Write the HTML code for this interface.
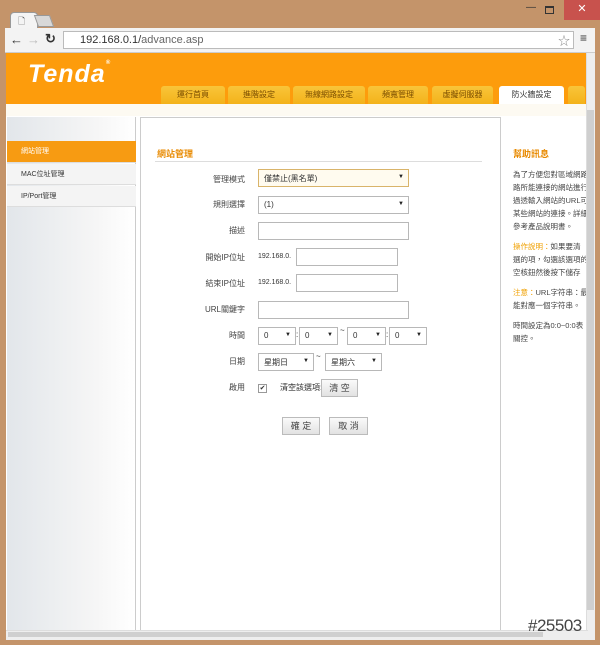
<!DOCTYPE html>
<html><head><meta charset="utf-8"><style>
*{margin:0;padding:0;box-sizing:border-box}
body{width:600px;height:645px;background:#c4946a;position:relative;overflow:hidden;font-family:"Liberation Sans","Noto Sans CJK TC",sans-serif;font-size:8px;color:#333}
.a{position:absolute}
.sel{position:absolute;background:#fff;border:1px solid #b8b8b8;font-size:8px;padding:3px 5px;height:18px}
.sel:after{content:"▼";position:absolute;right:4px;top:4px;font-size:6px;color:#222}
.inp{position:absolute;background:#fff;border:1px solid #b8b8b8;height:18px}
.lbl{position:absolute;width:100px;text-align:right;font-size:8px;color:#444}
.btn{position:absolute;background:linear-gradient(#fafafa,#e2e2e2);border:1px solid #bbb;font-size:9px;text-align:center;line-height:16px;color:#444}
.tab{position:absolute;top:86px;height:18px;background:linear-gradient(#f9c53a,#f3b21a);border-radius:3px 3px 0 0;font-size:8px;text-align:center;line-height:18px;color:#7a4d00}
.side{position:absolute;left:7px;width:129px;height:21px;font-size:7px;line-height:21px;padding-left:14px;border-bottom:1px solid #ddd}
</style></head><body>
<div class="a" style="left:564px;top:0;width:36px;height:20px;background:#c8524d;color:#fff;text-align:center;font-size:11px;line-height:18px">✕</div>
<div class="a" style="left:526px;top:2px;font-size:10px;color:#333">—</div>
<div class="a" style="left:545px;top:6px;width:9px;height:8px;border:1px solid #333;border-top-width:2px"></div>
<div class="a" style="left:10px;top:12px;width:28px;height:17px;background:#f4f4f4;border-radius:4px 4px 0 0;border:1px solid #999;border-bottom:none"></div>
<div class="a" style="left:18px;top:14px;font-size:9px;color:#555">🗋</div>
<div class="a" style="left:36px;top:15px;width:16px;height:12px;background:#d8d8d8;border:1px solid #999;transform:skewX(20deg)"></div>
<div class="a" style="left:5px;top:28px;width:590px;height:25px;background:#f3f3f3;border-bottom:1px solid #ccc"></div>
<div class="a" style="left:10px;top:32px;font-size:13px;color:#333">←</div>
<div class="a" style="left:27px;top:32px;font-size:13px;color:#bbb">→</div>
<div class="a" style="left:45px;top:31px;font-size:13px;color:#333;font-weight:bold">↻</div>
<div class="a" style="left:63px;top:31px;width:511px;height:18px;background:#fff;border:1px solid #bbb;font-size:11px;line-height:16px;padding-left:16px;color:#333">192.168.0.1/<span style="color:#666">advance.asp</span></div>
<div class="a" style="left:558px;top:32px;font-size:12px;color:#888">☆</div>
<div class="a" style="left:580px;top:31px;font-size:12px;color:#333">≡</div>
<div class="a" style="left:6px;top:53px;width:582px;height:587px;background:#fff"></div>
<div class="a" style="left:6px;top:53px;width:582px;height:52px;background:#fd9c0c"></div>
<div class="a" style="left:28px;top:60px;font-size:25px;font-weight:bold;font-style:italic;color:#fff;letter-spacing:1px;font-family:'Liberation Sans',sans-serif">Tenda<span style="font-size:6px;vertical-align:top">®</span></div>
<div class="tab" style="left:161px;width:64px">運行首頁</div>
<div class="tab" style="left:228px;width:62px">進階設定</div>
<div class="tab" style="left:293px;width:72px">無線網路設定</div>
<div class="tab" style="left:368px;width:60px">頻寬管理</div>
<div class="tab" style="left:432px;width:61px">虛擬伺服器</div>
<div class="tab" style="left:499px;width:65px;background:#fff;color:#333">防火牆設定</div>
<div class="tab" style="left:568px;width:17px"></div>
<div class="a" style="left:6px;top:104px;width:582px;height:12px;background:#fdfaf2"></div>
<div class="a" style="left:7px;top:117px;width:129px;height:513px;background:linear-gradient(90deg,#e2e6ea,#f6f6f6 70%,#fff);border-right:1px solid #ccc"></div>
<div class="side" style="top:141px;background:#f79b12;color:#fff;height:22px">網站管理</div>
<div class="side" style="top:164px;background:#f4f4f4">MAC位址管理</div>
<div class="side" style="top:186px;background:#f4f4f4">IP/Port管理</div>
<div class="a" style="left:140px;top:117px;width:361px;height:513px;border:1px solid #ccc;border-bottom:none"></div>
<div class="a" style="left:157px;top:147px;font-size:9px;color:#e88a00;font-weight:bold">網站管理</div>
<div class="a" style="left:155px;top:161px;width:327px;height:1px;background:#ddd"></div>
<div class="lbl" style="left:145px;top:174px">管理模式</div>
<div class="sel" style="left:258px;top:169px;width:151px;border-color:#d9b46a;background:#fffbef">僅禁止(黑名單)</div>
<div class="lbl" style="left:145px;top:199px">規則選擇</div>
<div class="sel" style="left:258px;top:196px;width:151px">(1)</div>
<div class="lbl" style="left:145px;top:225px">描述</div>
<div class="inp" style="left:258px;top:222px;width:151px"></div>
<div class="lbl" style="left:145px;top:252px">開始IP位址</div>
<div class="a" style="left:258px;top:253px;font-size:7px">192.168.0.</div>
<div class="inp" style="left:296px;top:248px;width:102px"></div>
<div class="lbl" style="left:145px;top:278px">結束IP位址</div>
<div class="a" style="left:258px;top:279px;font-size:7px">192.168.0.</div>
<div class="inp" style="left:296px;top:274px;width:102px"></div>
<div class="lbl" style="left:145px;top:304px">URL關鍵字</div>
<div class="inp" style="left:258px;top:301px;width:151px"></div>
<div class="lbl" style="left:145px;top:330px">時間</div>
<div class="sel" style="left:258px;top:327px;width:38px">0</div>
<div class="a" style="left:296px;top:330px">:</div>
<div class="sel" style="left:299px;top:327px;width:39px">0</div>
<div class="a" style="left:340px;top:326px">~</div>
<div class="sel" style="left:347px;top:327px;width:39px">0</div>
<div class="a" style="left:386px;top:330px">:</div>
<div class="sel" style="left:389px;top:327px;width:38px">0</div>
<div class="lbl" style="left:145px;top:356px">日期</div>
<div class="sel" style="left:258px;top:353px;width:56px">星期日</div>
<div class="a" style="left:316px;top:352px">~</div>
<div class="sel" style="left:325px;top:353px;width:57px">星期六</div>
<div class="lbl" style="left:145px;top:382px">啟用</div>
<div class="a" style="left:258px;top:384px;width:9px;height:9px;border:1px solid #999;font-size:7px;line-height:8px;text-align:center">✔</div>
<div class="a" style="left:280px;top:382px">清空該選項:</div>
<div class="btn" style="left:321px;top:379px;width:37px;height:18px">清 空</div>
<div class="btn" style="left:282px;top:417px;width:38px;height:18px">確 定</div>
<div class="btn" style="left:329px;top:417px;width:39px;height:18px">取 消</div>
<div class="a" style="left:513px;top:147px;font-size:9px;color:#e88a00;font-weight:bold">幫助訊息</div>
<div class="a" style="left:513px;top:168px;width:73px;height:180px;overflow:hidden;font-size:7.5px;line-height:13px;white-space:nowrap;color:#444">為了方便您對區域網路<br>路所能連接的網站進行<br>過透輸入網站的URL可<br>某些網站的連接。詳細<br>參考產品說明書。<br><div style="height:7px"></div><span style="color:#f0a000">操作說明：</span>如果要清<br>選的項，勾選該選項的<br>空核鈕然後按下儲存<br><div style="height:7px"></div><span style="color:#f0a000">注意：</span>URL字符串：最<br>能對應一個字符串。<br><div style="height:7px"></div>時間設定為0:0~0:0表<br>關控。</div>
<div class="a" style="left:586px;top:53px;width:9px;height:587px;background:#eee;border-left:1px solid #ddd"></div>
<div class="a" style="left:587px;top:110px;width:7px;height:500px;background:#cfcfcf"></div>
<div class="a" style="left:6px;top:630px;width:582px;height:10px;background:#eee;border-top:1px solid #ddd"></div>
<div class="a" style="left:8px;top:632px;width:535px;height:5px;background:#cfcfcf"></div>
<div class="a" style="left:528px;top:616px;font-size:17px;color:#444;letter-spacing:-0.5px">#25503</div>
</body></html>
